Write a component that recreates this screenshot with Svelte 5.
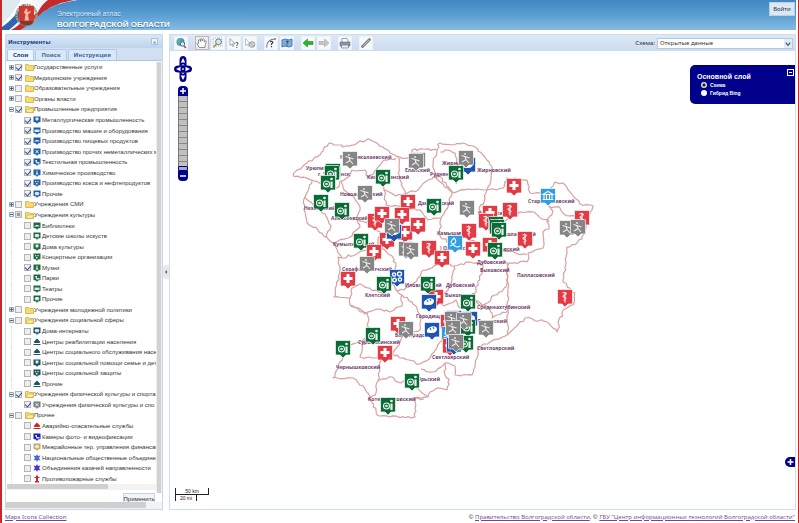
<script>
  const groups = [
    { name: 'Государственные услуги', on: true },
    { name: 'Медицинские учреждения', on: true },
    { name: 'Образовательные учреждения' },
    { name: 'Органы власти' },
    { name: 'Промышленные предприятия', on: true, open: true, color: '#1f5fae', items: [
      ['Металлургическая промышленность', 1, 'drop'], ['Производство машин и оборудования', 1, 'bar'],
      ['Производство пищевых продуктов', 1, 'bread'], ['Производство прочих неметаллических м', 1, 'cross'],
      ['Текстильная промышленность', 1, 'cloth'], ['Химическое производство', 1, 'flask'],
      ['Производство кокса и нефтепродуктов', 1, 'dots'], ['Прочие', 1, 'gear']] },
    { name: 'Учреждения СМИ' },
    { name: 'Учреждения культуры', mixed: true, open: true, color: '#1c6b3c', items: [
      ['Библиотеки', 0, 'bread'], ['Детские школы искуств', 0, 'gear'], ['Дома культуры', 0, 'drop'],
      ['Концертные организации', 0, 'dots'], ['Музеи', 1, 'flask'], ['Парки', 0, 'cloth'],
      ['Театры', 0, 'bar'], ['Прочие', 0, 'gear']] },
    { name: 'Учреждения молодежной политики' },
    { name: 'Учреждения социальной сферы', open: true, color: '#1d5560', items: [
      ['Дома-интернаты', 0, 'gear'], ['Центры реабилитации населения', 0, 'people', 1],
      ['Центры социального обслуживания насе', 0, 'people', 1], ['Центры социальной помощи семье и детя', 0, 'drop'],
      ['Центры социальной защиты', 0, 'dots'], ['Прочие', 0, 'people', 1]] },
    { name: 'Учреждения физической культуры и спорта', on: true, open: true, color: '#7b7b7b', items: [
      ['Учреждения физической культуры и спо', 1, 'cross']] },
    { name: 'Прочее', open: true, color: '#1717c8', items: [
      ['Аварийно-спасательные службы', 0, 'people', 1, '#d5232b'], ['Камеры фото- и видеофиксации', 0, 'cloth'],
      ['Межрайонные тер. управления финансам', 0, 'gear', 0, '#c9a94a'],
      ['Национальные общественные объединен', 0, 'burst', 1, '#4a6bd0'],
      ['Объединения казачей направленности', 0, 'burst', 1, '#4b35d0'],
      ['Противопожарные службы', 0, 'hydrant', 1, '#d5232b']] }
  ];
  const rows = groups.flatMap((g, i) => [
    { ...g, id: `g${i}`, parent: true },
    ...(g.items ?? []).map(([name, on, glyph, plain, color], k) => ({
      name, on: !!on, glyph, plain, color: color ?? g.color, id: `g${i}-${k}`
    }))
  ]);

  const glyphs = {
    drop: 'M2.5 1.5h3v2l-1.5 1.5l-1.5-1.5z',
    bar: 'M1.5 2.5h5v2.5h-5z',
    bread: 'M1.5 4.5c0-2 5-2 5 0z',
    cross: 'M2 2l1 0l1 1l1-1h1l-1.3 1.6l1.3 1.6h-1l-1-1l-1 1h-1l1.3-1.6z',
    cloth: 'M2 2h2v2h2.5v1.5h-3z',
    flask: 'M3.5 1.5h1v2l1 2h-3l1-2z',
    dots: 'M2 2h1.2v1.2h-1.2zM4.5 2h1.2v1.2h-1.2zM3 4h1.5v1.5h-1.5z',
    gear: 'M2.5 2l3 0l.8 1.5l-.8 1.7h-3l-.8-1.7z',
    people: 'M4 .5l1.5 1.5l1.8 2l-.8 1h-5l-.8-1l1.8-2zM.5 6h7v1h-7z',
    burst: 'M4 0l1 2l2.5-.5l-1.500 2.500l1.500 2.500l-2.500-.5l-1 2l-1-2l-2.500.5l1.500-2.500l-1.500-2.500l2.500.5z',
    hydrant: 'M3 .5h2v1.500h1.500v1h-1.500v3h1v1.500h-4v-1.500h1v-3h-1.500v-1h1.500z'
  };

  // Adds small deterministic wobbles to each border segment.
  let seed = 11;
  const rnd = () => ((seed = (seed * 16807) % 2147483647) / 2147483647 - 0.5);
  function border(text) {
    const pts = text.split(' ').map((p) => p.split(',').map(Number));
    let d = `M${pts[0]}`;
    for (let i = 1; i < pts.length; i++) {
      const [a, b] = pts[i - 1];
      const [c, e] = pts[i];
      const n = Math.max(1, Math.round(Math.hypot(c - a, e - b) / 3));
      for (let k = 1; k <= n; k++) {
        const w = k < n ? 2.4 : 0;
        d += `L${(a + ((c - a) * k) / n + rnd() * w).toFixed(1)} ${(b + ((e - b) * k) / n + rnd() * w).toFixed(1)}`;
      }
    }
    return d;
  }
  const borders = [
    '293,175 307,163 320,155 329,143 343,147 357,143 368,139 378,144 390,153 400,157 412,158 412,150 423,149 437,150 440,143 452,145 463,143 475,147 483,155 492,167 491,180 487,190 503,188 507,178 527,180 530,193 540,193 552,187 555,182 563,183 570,192 580,204 593,206 592,210 587,218 585,233 577,243 567,247 566,262 563,282 575,293 573,305 563,310 557,332 547,322 525,318 507,335 490,342 478,348 477,358 475,367 472,375 455,375 455,366 445,363 445,375 449,379 447,390 440,388 430,392 428,397 415,398 415,417 390,417 377,415 368,393 353,378 333,378 340,362 343,357 350,345 360,342 368,335 368,323 367,313 350,305 350,298 334,297 340,270 338,257 342,258 333,243 318,230 307,223 304,210 305,197 312,180 293,175',
    '312,180 325,185 337,188 341,181 350,176 352,170 365,170 368,177 376,170 384,160 396,158',
    '341,181 344,190 353,196 360,207 357,219 360,227 352,236 333,243',
    '305,197 325,214 331,226 326,238',
    '376,170 384,190 396,196 406,194 400,180 398,157',
    '400,195 418,190 428,180 440,176 452,192 468,189 487,190',
    '437,150 433,165 438,180 452,192 448,206 441,218 440,236 452,245 462,232 470,240 482,245',
    '440,152 445,150 455,153 458,166 456,184',
    '384,190 386,205 397,206 420,210 428,220 441,218',
    '357,219 371,223 380,232 378,245 368,250 342,258',
    '378,245 392,256 396,266 390,280 396,290 404,290 414,283 424,270 432,268 441,261 440,246',
    '350,298 352,288 360,284 368,288 384,294 392,282',
    '350,305 365,314 378,309 390,312 402,306 402,295 396,290',
    '402,295 416,306 421,318 420,330 411,334 404,330 400,342 392,354 385,358 380,362 378,381 376,393 368,400',
    '368,335 362,346 360,357 375,358 385,358',
    '392,354 409,360 420,364 430,358 440,342 447,330',
    '378,381 392,377 401,383 408,379 421,392 428,397',
    '421,369 433,372 445,363',
    '415,398 424,399',
    '441,261 454,266 452,280 446,292 437,300 444,306 456,300 460,308',
    '454,266 470,262 482,265 484,262 478,285 472,300 483,306 495,295 506,287 509,263 527,262 528,253 535,250 543,248 543,232 549,229 547,222 553,211 549,206 560,208 564,214 576,216',
    '487,190 484,202 479,208 482,222 497,228 512,217 522,212 534,212 540,218 549,222',
    '507,262 508,335',
    '472,300 485,305 492,313 492,318 508,310',
    '483,250 503,251 527,255'
  ].map(border);

  const labels = [
    ['Новониколаевский', 340, 159], ['Урюпинский', 306, 170], ['г. Урюпинск', 318, 176], ['Киквидзенский', 367, 179],
    ['Еланский', 405, 172], ['Руднянский', 430, 176], ['Жирновский', 442, 165], ['Жирновский', 477, 172],
    ['Новоаннинский', 340, 196], ['Нехаевский', 304, 210], ['Алексеевский', 331, 220], ['Даниловский', 418, 205],
    ['Кумылженский', 333, 246], ['Камышинский', 437, 235], ['Котовский', 478, 215], ['Старополтавский', 528, 203],
    ['Николаевский', 497, 236], ['Ольховский', 443, 250], ['Быковский', 490, 251], ['Серафимовичский', 342, 271],
    ['Иловлинский', 405, 287], ['Дубовский', 477, 264], ['Быковский', 480, 272], ['Палласовский', 517, 277],
    ['Клетский', 365, 297], ['Дубовский', 446, 287], ['Быковский', 445, 297], ['Среднеахтубинский', 477, 309],
    ['Городищенский', 416, 318], ['Ленинский', 477, 323], ['Волгоградский', 395, 337], ['Суровикинский', 358, 344],
    ['Светлоярский', 477, 350], ['Светлоярский', 432, 359], ['Чернышковский', 336, 369], ['Октябрьский', 405, 381],
    ['Котельниковский', 368, 401]
  ];

  const fill = { sport: '#858585', museum: '#0b6b36', cross: '#e23b43', snake: '#e23b43', bank: '#2f9fe0', drop: '#2f9fe0', bread: '#1c56b0', gear: '#1c56b0' };
  const markers = [
    ['bread', 468, 165], ['sport', 350, 159], ['sport', 418, 160], ['sport', 416, 161], ['museum', 333, 171], ['museum', 332, 173], ['museum', 328, 183],
    ['museum', 383, 177], ['museum', 456, 173], ['sport', 466, 158], ['cross', 514, 186], ['sport', 365, 193], ['bank', 548, 196],
    ['museum', 321, 202], ['museum', 342, 210], ['cross', 408, 202], ['museum', 434, 206], ['sport', 467, 208],
    ['snake', 375, 221], ['cross', 382, 214], ['cross', 402, 215], ['cross', 405, 233], ['cross', 387, 240], ['bread', 394, 232], ['sport', 392, 226], ['cross', 418, 225],
    ['snake', 510, 210], ['cross', 490, 213], ['snake', 486, 221], ['museum', 496, 224], ['museum', 497, 227], ['museum', 499, 230], ['snake', 469, 231], ['snake', 525, 239],
    ['snake', 582, 218], ['sport', 567, 228], ['sport', 578, 227], ['museum', 361, 241], ['cross', 374, 252],
    ['sport', 406, 249], ['sport', 411, 250], ['snake', 429, 248], ['drop', 455, 243], ['cross', 473, 249], ['cross', 490, 245], ['museum', 495, 250],
    ['cross', 442, 258], ['sport', 367, 264], ['cross', 348, 279], ['gear', 397, 277], ['museum', 384, 284],
    ['cross', 436, 297], ['museum', 428, 284], ['bread', 429, 302], ['museum', 468, 302], ['snake', 565, 297],
    ['cross', 398, 324], ['sport', 406, 329], ['bread', 432, 330], ['museum', 373, 335], ['museum', 343, 348],
    ['cross', 385, 353], ['sport', 486, 328], ['cross', 448, 322], ['drop', 449, 334], ['cross', 450, 346], ['bread', 454, 318], ['bread', 454, 345], ['bread', 470, 319],
    ['museum', 468, 327], ['museum', 466, 343], ['sport', 452, 319], ['sport', 464, 320], ['sport', 453, 328], ['sport', 456, 342],
    ['museum', 412, 381], ['museum', 388, 405]
  ];

  const tools = ['globe', 'hand', 'zoom', 'info', 'clear', 'line', 'area', 'back', 'next', 'print', 'link'];
  const toolNames = { globe: 'Весь мир', hand: 'Перемещение', zoom: 'Увеличить', info: 'Информация', clear: 'Сброс', line: 'Длина', area: 'Площадь', back: 'Назад', next: 'Вперёд', print: 'Печать', link: 'Ссылка' };
  let layer = $state('scheme');
</script>

{#snippet pan(dir, label)}
  <button class="pan {dir}" aria-label={label}>
    <svg viewBox="0 0 10 12"><path d="M1.5 12V5.500A3.500 4.500 0 0 1 8.500 5.500V12L5 9z" fill="#00008b" /><path d="M5 3L7.200 7.500H2.800z" fill="#fff" /></svg>
  </button>
{/snippet}

<div class="page">
  <header>
    <svg class="logo" viewBox="0 0 90 30" width="90" height="30" aria-hidden="true">
      <path d="M0 0H18Q10 14 0 24z" fill="#dfeaf3" />
      <path d="M0 30V24Q10 14 18 0H40Q28 16 12 30z" fill="#fff" />
      <path d="M0 30V27Q13 18 21 4L28 8Q16 24 10 30z" fill="#2c66b0" />
      <path d="M7 30Q22 18 34 0H76Q52 3 38 14Q24 25 16 30z" fill="#eef3f8" />
      <path d="M9 30Q22 24 35 0H72Q48 4 34 18Q24 27 18 30z" fill="#c22b2b" />
      <path d="M30 0H46Q40 4 36 12L31 16z" fill="#f4f7fa" />
      <circle cx="24.500" cy="15" r="10" fill="none" stroke="#a59a83" stroke-width="2.500" stroke-dasharray="2 .6" />
      <path d="M17 6h15v13q-1 5-7.500 6q-6.500-1-7.500-6z" fill="#d2382f" />
      <path d="M24 8l1.500 1.500v3l3-2v2l-2.500 2l1 6h-4.500l1-6l-1.500-2z" fill="#f0b9a8" />
      <path d="M17 21h15l-2 3q-5 3-11 0z" fill="#7c3a34" />
    </svg>
    <div class="title"><span>Электронный атлас</span><strong>ВОЛГОГРАДСКОЙ ОБЛАСТИ</strong></div>
    <button class="login">Войти</button>
  </header>

  <main>
    <aside>
      <div class="caption"><b>Инструменты</b><button aria-label="Свернуть">«</button></div>
      <nav><button class="active">Слои</button><button>Поиск</button><button>Инструкция</button></nav>
      <div class="body">
        <div class="scroll">
          <div class="tree">
            {#each rows as r (r.id)}
              <div class="row" class:child={!r.parent}>
                {#if r.parent}
                  <button class="expand" aria-label="Развернуть">
                    <svg viewBox="0 0 5 5" width="5" height="5"><path d="M.5.5h4v4h-4z" fill="#e8eef5" stroke="#8ea4bd" /><path d={r.open ? 'M1 2.500h3' : 'M1 2.500h3M2.500 1v3'} stroke="#345" stroke-width=".8" /></svg>
                  </button>
                {/if}
                <input type="checkbox" id={r.id} checked={r.on} class:mixed={r.mixed} />
                {#if r.parent}
                  <svg class="folder" viewBox="0 0 9 8" width="9" height="8"><path d="M.5 1.500h3l1 1h4v5h-8z" fill="#f5dc6d" stroke="#c9a53a" stroke-width=".7" />{#if r.open}<path d="M1 7.300L2.500 4h6.300L7.800 7.300z" fill="#fff0a0" stroke="#c9a53a" stroke-width=".6" />{/if}</svg>
                {:else}
                  <svg class="pin" viewBox="0 0 8 8" width="8" height="8">
                    {#if r.plain}<path d={glyphs[r.glyph]} fill={r.color} />
                    {:else}<path d="M.5.5h7v5.500L5 6.500L4 8L3 6.500L.5 6z" fill={r.color} /><path d={glyphs[r.glyph]} fill="#dbe8f4" />{/if}
                  </svg>
                {/if}
                <label for={r.id}>{r.name}</label>
              </div>
            {/each}
          </div>
          <div class="hbar"><i></i></div>
          <div class="vbar"></div>
        </div>
        <div class="apply"><button>Применить</button></div>
        <div class="hbar wide"><i></i></div>
      </div>
    </aside>

    <button class="split" aria-label="Свернуть панель"><svg viewBox="0 0 4 6" width="4" height="6"><path d="M3 1L1 3L3 5z" fill="#555" /></svg></button>

    <section>
      <div class="toolbar">
        {#each tools as t}
          <button class="tool {t}" class:pressed={t === 'hand'} aria-label={toolNames[t]}>
            <svg viewBox="0 0 12 12" width="12" height="12" fill="none">
              {#if t === 'globe'}<circle cx="5.500" cy="5" r="4" fill="#4b93d0" /><path d="M2.500 3q2-2 4-1l-1 2l1 2l-2 2q-2-1-2.500-5z" fill="#5bb08a" /><circle cx="7.500" cy="7" r="2.200" fill="#d9eefb" stroke="#4b7391" /><path d="M9 9l2 2" stroke="#b53b2a" stroke-width="1.500" />
              {:else if t === 'hand'}<path d="M3 10.500L1 6.500q.3-1.200 1.600.2L2.500 3q.8-1 1.500 0l.5 1.500V2q1-1 1.600 0v2l.6-1.700q1-.8 1.500.2V5l1-1.200q1-.3 1 .9L9 8.500V10.500z" fill="#fff" stroke="#777" stroke-width=".8" />
              {:else if t === 'zoom'}<path d="M1 1h9v8H1z" stroke="#999" stroke-width=".7" stroke-dasharray="1 1" /><circle cx="6.500" cy="4.800" r="2.900" fill="#d3ecfb" stroke="#5c7a90" /><path d="M4.300 7L1.500 10.500" stroke="#c28b3d" stroke-width="1.700" />
              {:else if t === 'info'}<path d="M2 1.500v7l1.700-1.500l1 2.500l1-.5l-1-2.300h2.200z" fill="#fff" stroke="#888" stroke-width=".7" /><path d="M7.500 6q1.500-1.200 2.500 0q.3 1-1.200 2v.8M8.800 10v1" stroke="#555" />
              {:else if t === 'clear'}<path d="M1.500 1.500v7l1.700-1.500l1 2l1-.5l-1-1.800h2z" fill="#fff" stroke="#aaa" stroke-width=".7" /><circle cx="8" cy="7.500" r="2.800" fill="#ddd" stroke="#999" /><path d="M6 5.500l4 4" stroke="#999" />
              {:else if t === 'line'}<path d="M1.500 10Q2 2 10.500 2" stroke="#777" stroke-width="1.100" /><path d="M5 5q1.500-1.500 2.800 0q.2 1-1.300 2v1M6.500 9v1.200" stroke="#333" stroke-width="1.100" /><path d="M9 1h2v2H9zM1 9h1.500v1.500H1z" fill="#999" />
              {:else if t === 'area'}<path d="M1 3l3-1l4 1l3-1v7L8 10L4 9l-3 1z" fill="#7fadd9" stroke="#4b7db5" /><path d="M5 4.500q1-1 2.200 0q.2 1-1.200 1.500v.7M6 7.700v1" stroke="#17406e" />
              {:else if t === 'back'}<path d="M1 6l4.500-4v2.500H11v3H5.500V10z" fill="#2fb52b" stroke="#1e8a1e" stroke-width=".6" />
              {:else if t === 'next'}<path d="M11 6L6.500 2v2.500H1v3h5.500V10z" fill="#c4c4c4" stroke="#aaa" stroke-width=".6" />
              {:else if t === 'print'}<path d="M3 5V1.500h5L9 3v2" fill="#fff" stroke="#6f8aa8" stroke-width=".8" /><path d="M1 5h10v4H1z" fill="#8b97a5" stroke="#667" stroke-width=".6" /><path d="M2.500 8h7v3h-7z" fill="#dff0fa" stroke="#667" stroke-width=".6" />
              {:else}<path d="M2.500 9.500L5.500 6.500M6 6L9.500 2.500" stroke="#888" stroke-width="3" stroke-linecap="round" /><path d="M3 9L9 3" stroke="#c9c9c9" stroke-width=".8" />{/if}
            </svg>
          </button>
        {/each}
        <label for="scheme-select">Схема:</label>
        <div class="select"><select id="scheme-select"><option>Открытые данные</option></select><svg viewBox="0 0 8 10" width="8" height="9"><path d="M1.500 4l2.500 3l2.500-3" stroke="#456" stroke-width="1.300" fill="none" /></svg></div>
      </div>

      <div class="map">
        <svg class="canvas" viewBox="170 51 625 458" role="img" aria-label="Карта Волгоградской области">
          <defs>
            {#each Object.entries(fill) as [kind, color]}
              <g id="m-{kind}">
                <path d="M-7.500-6.500q0-1 1-1h13q1 0 1 1v12.500q0 1-1 1H3L0 10L-3 7H-6.500q-1 0-1-1z" fill={color} stroke="#fff" stroke-opacity=".85" stroke-width=".8" />
                {#if kind === 'sport'}<g stroke="#eee" stroke-width="1.100" fill="none"><path d="M-4.500-2.500L-1-1.500L3.500 0M-1-1.500L0 1.500L3 5M0 1.500L-4 4" /><circle cx="-1" cy="-4" r=".9" fill="#eee" stroke="none" /></g>
                {:else if kind === 'museum'}<g fill="none" stroke="#e8f4ec" stroke-width="1.100"><circle cx="-1.500" cy="1" r="3" /><circle cx="-1.500" cy="1" r=".8" /><path d="M3.500-1.500V5" stroke-width="2.200" /><circle cx="3.500" cy="-4" r=".8" fill="#e8f4ec" /></g>
                {:else if kind === 'cross'}<path d="M-1.500-5h3v3h3v3h-3v3h-3v-3h-3v-3h3z" fill="#fff" />
                {:else if kind === 'snake'}<path d="M0-5V5.500M-2.500-4q2.500-1.500 4 .2q0 1.500-2 1.800t-1.500 2q3 0 3 1.500q-1 1.500-2.500 1.500" stroke="#fff" fill="none" />
                {:else if kind === 'bank'}<path d="M-5.500 3.500h11M-5-1.500L0-4.500L5-1.500zM-4 3V-1M-1.500 3V-1M1.500 3V-1M4 3V-1" stroke="#fff" stroke-width="1.100" fill="none" />
                {:else if kind === 'drop'}<path d="M-1-5q3 3 1 5t-4-.5q0-2 3-4.500M-5 3q2.500-2 5 0t5 0" stroke="#fff" stroke-width="1.100" fill="none" />
                {:else if kind === 'bread'}<path d="M-5 2.500Q-6-.5-2.500-2.500T4-3Q6-1 4 1.500T-5 2.500z" fill="#fff" /><path d="M-2-2l1 2M1-3l1 2" stroke="#1c56b0" />
                {:else}<g stroke="#fff" stroke-width="1.400" fill="none"><circle cx="-3" cy="-2.500" r="1.600" /><circle cx="2.500" cy="-3" r="2" /><circle cx="-2.500" cy="3" r="1.800" /><circle cx="3" cy="2.500" r="1.600" /></g>{/if}
              </g>
            {/each}
          </defs>
          <g fill="none" stroke="#d9a0a0" stroke-width="1.200" stroke-linejoin="round">{#each borders as d}<path {d} />{/each}</g>
          <g class="names">{#each labels as [name, x, y]}<text {x} {y}>{name}</text>{/each}</g>
          {#each markers as [kind, x, y]}<use href="#m-{kind}" transform="translate({x} {y})" />{/each}
        </svg>

        <div class="compass">
          {@render pan('up', 'Вверх')}{@render pan('left', 'Влево')}{@render pan('right', 'Вправо')}{@render pan('down', 'Вниз')}
        </div>
        <div class="zoombar">
          <button class="plus" aria-label="Приблизить"><svg viewBox="0 0 10 10" width="10" height="10"><path d="M2 5h6M5 2v6" stroke="#fff" stroke-width="1.500" /></svg></button>
          <input type="range" min="0" max="12" value="0" aria-label="Масштаб" />
          <button class="minus" aria-label="Отдалить"><svg viewBox="0 0 10 10" width="10" height="10"><path d="M2 5h6" stroke="#fff" stroke-width="1.500" /></svg></button>
        </div>

        <fieldset>
          <legend>Основной слой</legend>
          <label><input type="radio" bind:group={layer} value="scheme" />Схема</label>
          <label><input type="radio" bind:group={layer} value="bing" />Гибрид Bing</label>
          <button type="button" aria-label="Свернуть слои"></button>
        </fieldset>
        <div class="scale"><span class="km">50 km</span><span class="mi">20 mi</span></div>
        <button class="overview" aria-label="Обзорная карта"><svg viewBox="0 0 10 10" width="10" height="10"><path d="M2.500 5h6M5.500 2v6" stroke="#fff" stroke-width="1.500" /></svg></button>
      </div>
    </section>
  </main>

  <footer>
    <a href="#icons">Maps Icons Collection</a>
    <span>© <a href="#gov">Правительство Волгоградской области</a>, © <a href="#center">ГБУ "Центр информационных технологий Волгоградской области"</a></span>
  </footer>
</div>

<style>
  :global(body) { background: #fff; }
  .page, .page * { box-sizing: border-box; }
  .page { display: flex; flex-direction: column; height: 100vh; border-left: 2px solid #c8282c; border-right: 1px solid #c8282c; padding-right: 2px; font: 6px/8px "Noto Sans", "Open Sans", sans-serif; color: #333; overflow: hidden; }
  button, input, select { font: inherit; margin: 0; padding: 0; border: 0; color: inherit; }
  button { background: none; display: flex; align-items: center; justify-content: center; }
  svg { display: block; flex: none; }

  header { height: 30px; flex: none; display: flex; background: linear-gradient(#4187c2, #5b9ed3 50%, #85bbe1); }
  .logo { margin-right: -35px; }
  .title { display: flex; flex-direction: column; padding-top: 9px; color: #fff; flex: 1; font-family: "Liberation Sans", Arial, sans-serif; text-shadow: 0 1px 1px #3b6d9b; }
  .title span { font-size: 7px; line-height: 10px; color: #deebf7; }
  .title strong { font-size: 8px; line-height: 12px; }
  .login { width: 26px; height: 14px; margin: 2px 1px 0 0; background: #dbe7f4; border: 1px solid #b9d0e8; font-size: 6px; }

  main { flex: 1; min-height: 0; display: flex; padding: 4px 0 0 3px; }
  aside { width: 158px; flex: none; display: flex; flex-direction: column; border: 1px solid #c5d9ea; }
  .caption { height: 13px; flex: none; display: flex; justify-content: space-between; align-items: center; padding: 0 4px 0 2px; background: linear-gradient(#dbe7f5, #bed3ec); color: #15428b; }
  .caption button { width: 7px; height: 7px; background: #edf4fb; border: 1px solid #a9c3e0; line-height: 6px; }
  nav { height: 13px; flex: none; display: flex; align-items: flex-end; gap: 1px; background: #d0e0f2; border-bottom: 1px solid #a6c4e6; padding-left: 1px; }
  nav button { height: 11px; padding: 0 5px; font-weight: bold; color: #416da3; background: #d9e7f6; border: 1px solid #b0cae8; border-bottom: 0; border-radius: 2px 2px 0 0; }
  nav .active { color: #15428b; background: #eef5fc; }

  .body { flex: 1; min-height: 0; display: flex; flex-direction: column; padding-top: 1px; overflow: hidden; }
  .scroll { flex: 1; min-height: 0; display: grid; grid-template: minmax(0, 1fr) 9px / minmax(0, 1fr) 6px; padding-left: 1px; font-family: "Liberation Sans", Arial, sans-serif; }
  .tree { display: grid; grid-auto-rows: 1fr; overflow: hidden; }
  .row { display: flex; align-items: center; white-space: nowrap; min-height: 0; padding-left: 2px; }
  .row.child { margin-left: 4px; border-left: 1px dotted #ddd; padding-left: 12px; }
  .expand { width: 5px; height: 5px; margin-right: 1px; }
  .row input { appearance: none; width: 7px; height: 7px; flex: none; border: 1px solid #b4b4b4; background: #eee; position: relative; }
  .row input:checked::after { content: ""; position: absolute; left: 1px; top: -1px; width: 3px; height: 5px; border: solid #35508f; border-width: 0 1px 1px 0; transform: rotate(40deg); }
  .row input.mixed { background: #999; box-shadow: inset 0 0 0 1px #ddd; }
  .folder { margin: 0 0 0 3px; }
  .pin { margin: 0 1px 0 2px; }
  .vbar { grid-column: 2; grid-row: 1 / 3; background: #d2d2d2; border: solid #eee; border-width: 0 1px; }
  .hbar { height: 6px; flex: none; background: #f3f3f3; align-self: start; width: 100%; }
  .hbar i { display: block; width: 68%; height: 5px; background: #cfcfcf; border-radius: 1px; }
  .hbar.wide { height: 7px; }
  .hbar.wide i { width: 90%; height: 6px; }
  .apply { height: 9px; flex: none; display: flex; justify-content: flex-end; overflow: hidden; padding-right: 7px; }
  .apply button { width: 32px; height: 12px; background: #f1f5fa; border: 1px solid #c5d3e2; font-family: "Liberation Sans", Arial, sans-serif; }

  .split { width: 6px; flex: none; height: 14px; align-self: center; background: #e9e9e9; border-radius: 3px 0 0 3px; }
  section { flex: 1; min-width: 0; display: flex; flex-direction: column; border: 1px solid #cfdfea; }
  .toolbar { height: 16px; flex: none; display: flex; align-items: center; padding: 0 2px 0 4px; background: linear-gradient(#dce8f5, #cbdcf0); gap: 2px; }
  .tool { width: 14px; height: 14px; background: #f6f9fc; border: 1px solid #eef2f7; }
  .tool.pressed { background: #eee; border-color: #c4b3b3; }
  .tool.hand, .tool.line, .tool.back, .tool.print, .tool.link { margin-left: 5px; }
  .toolbar label { margin-left: auto; }
  .select { display: flex; align-items: center; width: 136px; height: 11px; background: #fff; border: 1px solid #b5c8dc; }
  .select svg { background: #e3ecf6; }
  select { appearance: none; flex: 1; min-width: 0; height: 9px; line-height: 9px; padding-left: 2px; background: transparent; outline: 0; }

  .map { position: relative; flex: 1; min-height: 0; background: #fff; overflow: hidden; }
  .canvas { position: absolute; inset: 0; width: 100%; height: 100%; }
  .names { font: bold 5px "Open Sans", "Noto Sans", sans-serif; fill: #70406f; }
  .compass { position: absolute; left: 4px; top: 4px; width: 18px; height: 28px; }
  .pan { position: absolute; width: 10px; height: 12px; }
  .pan svg { width: 10px; height: 12px; }
  .up { left: 4px; top: 0; }
  .down { left: 4px; bottom: 0; transform: rotate(180deg); }
  .left { left: 0; top: 8px; transform: rotate(-90deg); }
  .right { right: 0; top: 8px; transform: rotate(90deg); }
  .zoombar { position: absolute; left: 8px; top: 35px; width: 10px; display: flex; flex-direction: column; }
  .zoombar button { width: 10px; height: 10px; background: #00008b; }
  .plus { border-radius: 4px 4px 0 0; }
  .zoombar .minus { border-radius: 0 0 4px 4px; }
  .zoombar input { appearance: none; writing-mode: vertical-lr; direction: rtl; width: 10px; height: 75px; border: solid #777; border-width: 0 1px; background: repeating-linear-gradient(#c0c0c0 0 5px, #888 5px 6px); }
  .zoombar input::-webkit-slider-thumb { appearance: none; width: 10px; height: 5px; background: #aab; border: 1px solid #00008b; border-radius: 1px; }

  fieldset { position: absolute; right: 0; top: 14px; width: 105px; height: 39px; margin: 0; padding: 8px 0 0 7px; border: 0; border-radius: 5px 0 0 5px; background: #00008b; color: #fff; font: bold 6px/8px "Liberation Sans", Arial, sans-serif; }
  legend { float: left; width: 90px; padding: 0; font-size: 7px; line-height: 8px; }
  fieldset label { clear: both; display: flex; align-items: center; gap: 3px; height: 8px; padding-left: 4px; font-size: 5px; }
  fieldset input { appearance: none; width: 6px; height: 6px; border-radius: 50%; background: #fff; }
  fieldset input:checked { background: radial-gradient(#222 0 1px, #ddd 2px); }
  fieldset button { position: absolute; right: 1px; top: 4px; width: 7px; height: 7px; border: 1px solid #fff; }
  fieldset button::after { content: ""; width: 3px; height: 1px; background: #fff; }
  .scale { position: absolute; left: 5px; bottom: 8px; width: 34px; font: 5px/6px "Liberation Sans", Arial, sans-serif; text-align: center; color: #222; display: flex; flex-direction: column; }
  .km { height: 7px; border: solid #222; border-width: 0 1px 1px; }
  .mi { width: 22px; height: 6px; border: solid #222; border-width: 0 1px; }
  .overview { position: absolute; right: 0; bottom: 42px; width: 10px; height: 10px; border-radius: 5px 0 0 5px; background: #00008b; }

  footer { height: 13px; flex: none; display: flex; justify-content: space-between; align-items: center; padding: 0 1px 0 3px; }
  footer span { font-family: "Open Sans", "Noto Sans", sans-serif; }
  footer a { color: #70489a; }
</style>
